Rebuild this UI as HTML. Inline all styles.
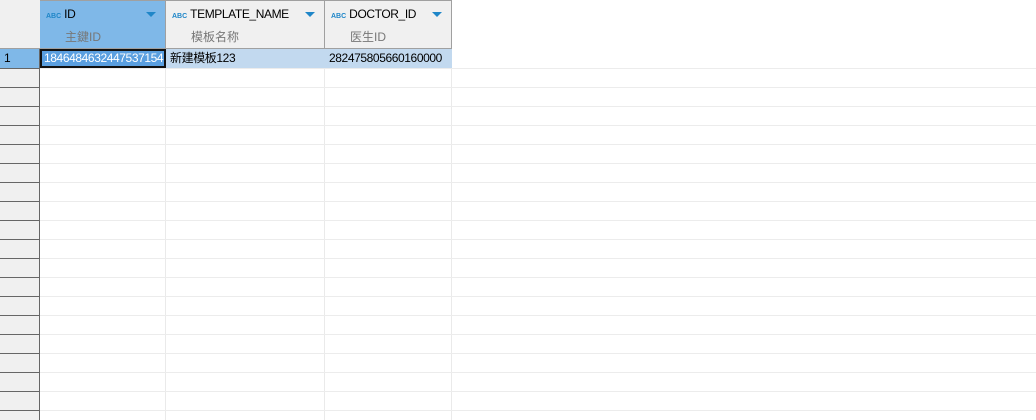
<!DOCTYPE html>
<html><head><meta charset="utf-8"><style>
body{margin:0;width:1036px;height:420px;overflow:hidden;background:#fff;position:relative;font-family:"Liberation Sans","Noto Sans CJK SC",sans-serif;font-size:12px;}
.a{position:absolute;box-sizing:border-box;}
.hdr{top:0;height:49px;background:#f0f0f0;border-right:1px solid #a0a0a0;border-bottom:1px solid #a0a0a0;border-top:1px solid #a0a0a0}
.t{position:absolute;left:6px;top:6px;color:#000;white-space:nowrap;letter-spacing:-0.4px}
.t b{font-size:7px;color:#1f86c8;font-weight:bold;margin-right:3px;letter-spacing:0}
.s{position:absolute;top:27px;color:#777;white-space:nowrap}
.tri{position:absolute;top:11px;width:0;height:0;border-left:5px solid transparent;border-right:5px solid transparent;border-top:5px solid #1f86c8}
.cell{position:absolute;top:49px;height:19px;line-height:19px;padding-left:4px;white-space:nowrap;box-sizing:border-box;letter-spacing:-0.4px}
</style></head><body>
<div class="a" style="left:0;top:0;width:40px;height:49px;background:#f0f0f0;border-bottom:1px solid #a0a0a0"></div>
<div class="a" style="left:0;top:49px;width:39px;height:371px;background:#f0f0f0"></div>
<div class="a" style="left:39px;top:49px;width:1px;height:371px;background:#666"></div>
<div class="a" style="left:0;top:49px;width:39px;height:19px;background:#7fb8e8;line-height:19px;padding-left:4px">1</div>
<div class="a hdr" style="left:40px;width:126px;background:#7fb8e8"><div class="t"><b>ABC</b>ID</div><div class="s" style="left:25px">主鍵ID</div><div class="tri" style="left:106px"></div></div>
<div class="a hdr" style="left:166px;width:159px"><div class="t"><b>ABC</b>TEMPLATE_NAME</div><div class="s" style="left:25px">模板名称</div><div class="tri" style="left:139px"></div></div>
<div class="a hdr" style="left:325px;width:127px"><div class="t"><b>ABC</b>DOCTOR_ID</div><div class="s" style="left:25px">医生ID</div><div class="tri" style="left:107px"></div></div>
<svg class="a" style="left:0;top:0" width="1036" height="420">
<g fill="#eaeaea">
<rect x="165" y="68" width="1" height="352"/><rect x="324" y="68" width="1" height="352"/><rect x="451" y="68" width="1" height="352"/>
</g>
</svg>
<div class="cell" style="left:166px;width:159px;background:#c2d9ef">新建模板123</div>
<div class="cell" style="left:325px;width:127px;background:#c2d9ef">282475805660160000</div>
<div class="cell" style="left:40px;width:126px;background:#5a9fe0;color:#fff;border:2px solid #111;padding-left:2px;line-height:15px">1846484632447537154</div>
<div id="lines"></div>
<script>
var h='';for(var y=68;y<420;y+=19){h+='<div class="a" style="left:40px;top:'+y+'px;width:996px;height:1px;background:#ececec"></div><div class="a" style="left:0;top:'+(y)+'px;width:39px;height:1px;background:#666"></div>';}
document.getElementById('lines').innerHTML=h;
</script>
</body></html>
